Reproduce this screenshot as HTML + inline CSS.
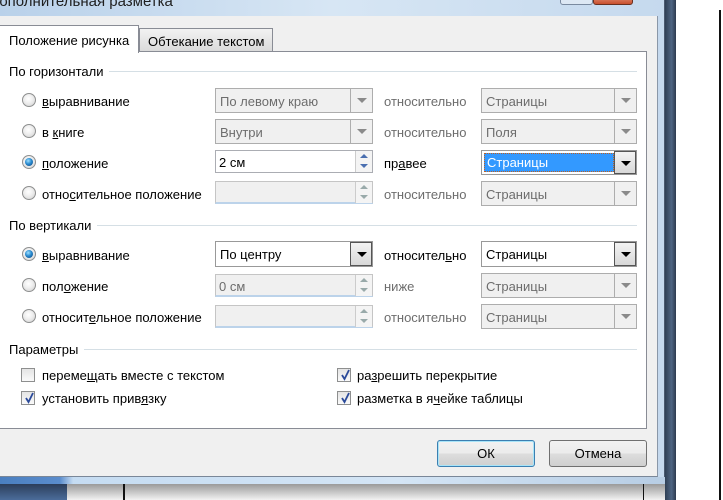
<!DOCTYPE html>
<html><head><meta charset="utf-8"><style>
*{box-sizing:border-box;margin:0;padding:0}
body{width:723px;height:500px;overflow:hidden;position:relative;background:#fff;font-family:"Liberation Sans","Noto Sans CJK SC",sans-serif;font-size:13px;color:#000}
.a{position:absolute}
.lbl{position:absolute;white-space:nowrap;line-height:15px;margin-top:1px}
.g{color:#6d6d6d}
.radio{position:absolute;width:14px;height:14px;border-radius:50%;border:1px solid #8e8f8f;background:radial-gradient(circle at 45% 40%,#fff 0,#f0f0f0 40%,#cfcfcf 100%)}
.radio.on::after{content:"";position:absolute;left:2px;top:2px;width:8px;height:8px;border-radius:50%;background:radial-gradient(circle at 40% 35%,#9fe0ff 0,#2a8bd0 45%,#0b3f78 100%)}
.cb{position:absolute;width:14px;height:14px;border:1px solid #8e8f8f;background:linear-gradient(#e4e4e4,#fafafa)}
.cb svg{position:absolute;left:1px;top:0}
.combo{position:absolute;height:25px;border:1px solid #adadad;background:#f0f0f0;color:#6d6d6d;padding:5px 0 0 4px;line-height:15px}
.combo .btn{position:absolute;right:0;top:0;width:22px;height:23px;border-left:1px solid #adadad;background:#f0f0f0}
.combo .btn::after{content:"";position:absolute;left:6px;top:9px;border-left:5px solid transparent;border-right:5px solid transparent;border-top:5px solid #8a8a8a}
.combo.en{background:#fff;color:#000;border-color:#999}
.combo.en .btn{border:1px solid #555;background:linear-gradient(#f3f3f3,#d8d8d8);top:0;right:0;height:23px}
.combo.en .btn::after{border-top-color:#000}
.spin{position:absolute;height:23px;border:1px solid #abadb3;background:#fff;padding:4px 0 0 3px;line-height:15px}
.spin.dis{background:#f0f0f0;color:#6d6d6d;border-color:#c5c5c5;border-bottom:2px solid #bcd3ea}
.spin .s{position:absolute;right:0;top:0;width:17px;height:21px;border-left:1px solid #ccc;background:#f4f4f4}
.spin .s::before{content:"";position:absolute;left:4px;top:3px;border-left:4px solid transparent;border-right:4px solid transparent;border-bottom:4px solid #9aa}
.spin .s::after{content:"";position:absolute;left:4px;top:13px;border-left:4px solid transparent;border-right:4px solid transparent;border-top:4px solid #9aa}
.spin.en .s::before{border-bottom-color:#4a6fb0}.spin.en .s::after{border-top-color:#4a6fb0}
.hdr{position:absolute;left:9px;white-space:nowrap;background:#fff;padding-right:6px;line-height:15px}
.hl{position:absolute;height:1px;background:#d5dfe5;left:9px;width:628px}
.btnp{position:absolute;height:27px;width:98px;border:1px solid #707070;border-radius:3px;background:linear-gradient(#f2f2f2 0,#ebebeb 50%,#dddddd 51%,#cfcfcf 100%);text-align:center;line-height:25px}
u{text-decoration:underline}
</style></head><body>
<div class="a" style="left:665px;top:0;width:11px;height:500px;background:linear-gradient(90deg,#2f3f55,#4e6582 60%,#2c3a4e)"></div>
<div class="a" style="left:719px;top:10px;width:2px;height:490px;background:#111"></div>
<div class="a" style="left:0;top:484px;width:665px;height:16px;background:linear-gradient(#9a9a9a,#f2f2f2)"></div>
<div class="a" style="left:0;top:484px;width:67px;height:16px;background:linear-gradient(#2c3e5a,#4b6c9a)"></div>
<div class="a" style="left:123px;top:484px;width:2px;height:16px;background:#111"></div>
<div class="a" style="left:643px;top:484px;width:1px;height:16px;background:#111"></div>
<div class="a" style="left:0;top:0;width:665px;height:484px;background:linear-gradient(90deg,#b9d1ea,#d7e6f4 50%,#c5d9ee);border-right:1px solid #4a5a70;border-bottom:1px solid #4a5a70;border-bottom-right-radius:5px"></div>
<div class="a" style="left:0;top:477px;width:665px;height:7px;background:linear-gradient(90deg,#4a7fc0 0,#5a8ccc 9%,#c5dcf2 11%,#d4e5f5 60%,#b7cde4 100%)"></div>
<div class="a lbl" style="left:-11px;top:-7px;font-size:15px;color:#1e1e1e">Дополнительная разметка</div>
<div class="a" style="left:593px;top:-4px;width:40px;height:9px;background:linear-gradient(#e08a70,#c8502e);border:1px solid #6a3020;border-radius:3px"></div>
<div class="a" style="left:560px;top:-4px;width:33px;height:9px;background:#dde8f4;border:1px solid #7a8aa0;border-radius:3px"></div>
<div class="a" style="left:0;top:16px;width:658px;height:461px;background:#f0f0f0;border-right:1px solid #8a97a8;border-bottom:1px solid #7a8798"></div>
<div class="a" style="left:-1px;top:51px;width:648px;height:378px;background:#fff;border:1px solid #898c95"></div>
<div class="a" style="left:139px;top:28px;width:134px;height:24px;background:linear-gradient(#f2f2f2,#dadada);border:1px solid #898c95"></div>
<div class="lbl" style="left:148px;top:33px">Обтекание текстом</div>
<div class="a" style="left:-1px;top:25px;width:140px;height:28px;background:#fff;border:1px solid #898c95;border-bottom:none"></div>
<div class="lbl" style="left:9px;top:32px">Положение рисунка</div>

<div class="hl" style="top:71px"></div><div class="hdr" style="top:64px">По горизонтали</div>
<div class="radio" style="left:22px;top:93px"></div><div class="lbl" style="left:42px;top:93px"><u>в</u>ыравнивание</div>
<div class="combo" style="left:215px;top:88px;width:158px">По левому краю<div class="btn"></div></div>
<div class="lbl g" style="left:384px;top:93px">относительно</div>
<div class="combo" style="left:481px;top:88px;width:156px">Страницы<div class="btn"></div></div>

<div class="radio" style="left:22px;top:124px"></div><div class="lbl" style="left:42px;top:124px">в <u>к</u>ниге</div>
<div class="combo" style="left:215px;top:119px;width:158px">Внутри<div class="btn"></div></div>
<div class="lbl g" style="left:384px;top:124px">относительно</div>
<div class="combo" style="left:481px;top:119px;width:156px">Поля<div class="btn"></div></div>

<div class="radio on" style="left:22px;top:155px"></div><div class="lbl" style="left:42px;top:155px"><u>п</u>оложение</div>
<div class="spin en" style="left:215px;top:150px;width:158px">2 см<div class="s"></div></div>
<div class="lbl" style="left:384px;top:155px">пр<u>а</u>вее</div>
<div class="combo en" style="left:481px;top:150px;width:156px;padding:0;border-color:#999"><div class="a" style="left:2px;top:2px;width:130px;height:19px;background:#3399ff;color:#fff;padding:1px 0 0 2px;line-height:16px;border:1px dotted #c06020">Страницы</div><div class="btn"></div></div>

<div class="radio" style="left:22px;top:186px"></div><div class="lbl" style="left:42px;top:186px">отно<u>с</u>ительное положение</div>
<div class="spin dis" style="left:215px;top:181px;width:158px"><div class="s"></div></div>
<div class="lbl g" style="left:384px;top:186px">относительно</div>
<div class="combo" style="left:481px;top:181px;width:156px">Страницы<div class="btn"></div></div>

<div class="hl" style="top:225px"></div><div class="hdr" style="top:218px">По вертикали</div>
<div class="radio on" style="left:22px;top:247px"></div><div class="lbl" style="left:42px;top:247px"><u>в</u>ыравнивание</div>
<div class="combo en" style="left:215px;top:241px;width:158px;height:26px">По центру<div class="btn" style="height:24px"></div></div>
<div class="lbl" style="left:384px;top:247px">относител<u>ь</u>но</div>
<div class="combo en" style="left:481px;top:241px;width:156px;height:26px">Страницы<div class="btn" style="height:24px"></div></div>

<div class="radio" style="left:22px;top:278px"></div><div class="lbl" style="left:42px;top:278px">пол<u>о</u>жение</div>
<div class="spin dis" style="left:215px;top:274px;width:158px">0 см<div class="s"></div></div>
<div class="lbl g" style="left:384px;top:278px">ниже</div>
<div class="combo" style="left:481px;top:273px;width:156px">Страницы<div class="btn"></div></div>

<div class="radio" style="left:22px;top:309px"></div><div class="lbl" style="left:42px;top:309px">относит<u>е</u>льное положение</div>
<div class="spin dis" style="left:215px;top:305px;width:158px"><div class="s"></div></div>
<div class="lbl g" style="left:384px;top:309px">относительно</div>
<div class="combo" style="left:481px;top:304px;width:156px">Страницы<div class="btn"></div></div>

<div class="hl" style="top:349px"></div><div class="hdr" style="top:342px">Параметры</div>
<div class="cb" style="left:21px;top:368px"></div><div class="lbl" style="left:42px;top:367px">переме<u>щ</u>ать вместе с текстом</div>
<div class="cb" style="left:21px;top:391px"><svg width="12" height="12"><path d="M3 6 L5.5 10 L10 1" fill="none" stroke="#2b4a9a" stroke-width="1.8"/></svg></div><div class="lbl" style="left:42px;top:390px">установить прив<u>я</u>зку</div>
<div class="cb" style="left:337px;top:368px"><svg width="12" height="12"><path d="M3 6 L5.5 10 L10 1" fill="none" stroke="#2b4a9a" stroke-width="1.8"/></svg></div><div class="lbl" style="left:357px;top:367px">ра<u>з</u>решить перекрытие</div>
<div class="cb" style="left:337px;top:391px"><svg width="12" height="12"><path d="M3 6 L5.5 10 L10 1" fill="none" stroke="#2b4a9a" stroke-width="1.8"/></svg></div><div class="lbl" style="left:357px;top:390px">разметка в я<u>ч</u>ейке таблицы</div>

<div class="btnp" style="left:437px;top:440px;border-color:#3c7fb1;box-shadow:inset 0 0 0 1px #a8e4f8">ОК</div>
<div class="btnp" style="left:549px;top:440px">Отмена</div>
</body></html>
